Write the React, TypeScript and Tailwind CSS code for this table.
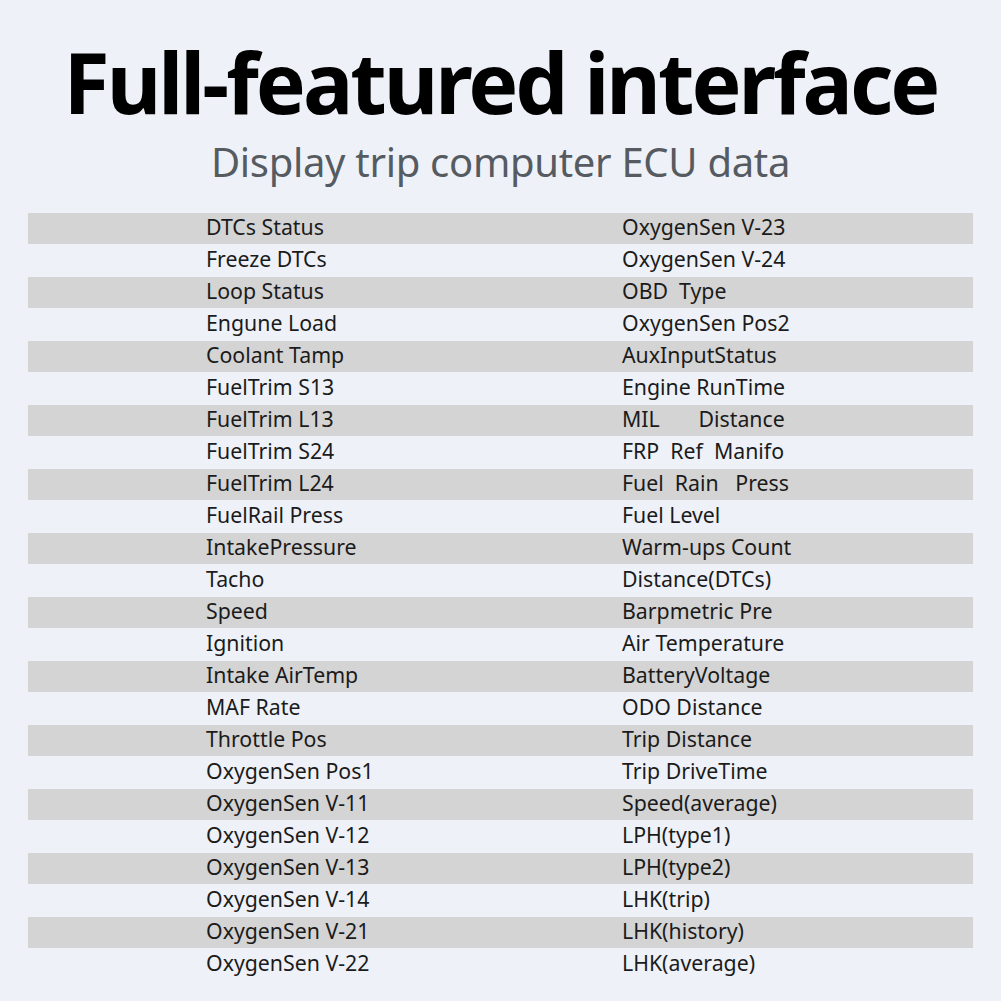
import React from "react";

const left = [
  "DTCs Status",
  "Freeze DTCs",
  "Loop Status",
  "Engune Load",
  "Coolant Tamp",
  "FuelTrim S13",
  "FuelTrim L13",
  "FuelTrim S24",
  "FuelTrim L24",
  "FuelRail Press",
  "IntakePressure",
  "Tacho",
  "Speed",
  "Ignition",
  "Intake AirTemp",
  "MAF Rate",
  "Throttle Pos",
  "OxygenSen Pos1",
  "OxygenSen V-11",
  "OxygenSen V-12",
  "OxygenSen V-13",
  "OxygenSen V-14",
  "OxygenSen V-21",
  "OxygenSen V-22",
];

const right = [
  "OxygenSen V-23",
  "OxygenSen V-24",
  "OBD\u00a0 Type",
  "OxygenSen Pos2",
  "AuxInputStatus",
  "Engine RunTime",
  "MIL\u00a0\u00a0\u00a0\u00a0\u00a0\u00a0 Distance",
  "FRP\u00a0 Ref\u00a0 Manifo",
  "Fuel\u00a0 Rain\u00a0\u00a0 Press",
  "Fuel Level",
  "Warm-ups Count",
  "Distance(DTCs)",
  "Barpmetric Pre",
  "Air Temperature",
  "BatteryVoltage",
  "ODO Distance",
  "Trip Distance",
  "Trip DriveTime",
  "Speed(average)",
  "LPH(type1)",
  "LPH(type2)",
  "LHK(trip)",
  "LHK(history)",
  "LHK(average)",
];

export default function App() {
  return (
    <div
      className="w-[1001px] h-[1001px] bg-[#eef2f8] overflow-hidden"
      style={{ fontFamily: '"Noto Sans", "Open Sans", sans-serif' }}
    >
      <div className="pt-[32px] text-center text-[84px] leading-[100px] font-bold text-black tracking-[-3px] whitespace-nowrap">
        Full-featured interface
      </div>
      <div className="mt-[2px] text-center text-[40px] leading-[56px] text-[#565b62] tracking-[-0.3px]">
        Display trip computer ECU data
      </div>
      <div className="mt-[23px] mx-[28px] flex flex-col">
        {left.map((l, i) => (
          <div
            key={i}
            className={
              i % 2 === 0
                ? "h-[31px] pb-[4px] bg-[#d4d4d4] flex items-center text-[21.3px] text-[#1b1b1b]"
                : "h-[33px] pb-[4px] flex items-center text-[21.3px] text-[#1b1b1b]"
            }
          >
            <div className="w-[594px] pl-[178px] whitespace-pre">{l}</div>
            <div className="whitespace-pre">{right[i]}</div>
          </div>
        ))}
      </div>
    </div>
  );
}
